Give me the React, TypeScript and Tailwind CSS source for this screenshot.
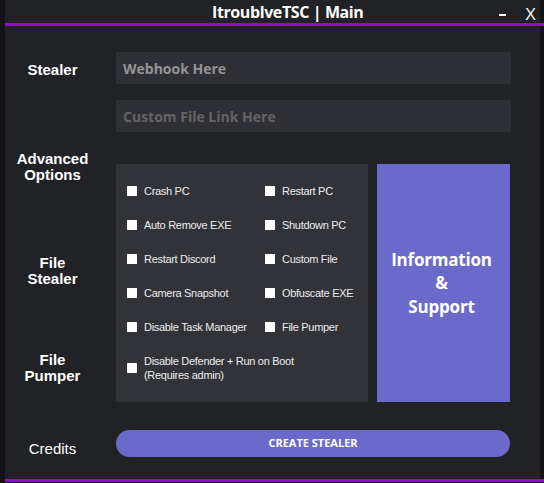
const segoe = { fontFamily: '"Open Sans", "Noto Sans", sans-serif' };
const arial = { fontFamily: '"Liberation Sans", Arial, sans-serif' };

function Check({ children }: { children: React.ReactNode }) {
  return (
    <div className="flex items-center gap-[7px]">
      <span className="h-[10px] w-[10px] shrink-0 bg-white" />
      <span className="text-[11px] leading-[14px] tracking-[-0.3px] text-[#ececec]">{children}</span>
    </div>
  );
}

export default function App() {
  const rows: [string, string][] = [
    ["Crash PC", "Restart PC"],
    ["Auto Remove EXE", "Shutdown PC"],
    ["Restart Discord", "Custom File"],
    ["Camera Snapshot", "Obfuscate EXE"],
    ["Disable Task Manager", "File Pumper"],
  ];

  return (
    <div className="flex h-[483px] w-[544px] bg-[#121212]">
      {/* window edge */}
      <div className="w-[5px] bg-[#141414]" />

      <div className="flex flex-1 flex-col bg-[#212226]">
        {/* Title bar */}
        <header className="flex h-[23px] items-center border-r-4 border-[#141414] text-white">
          <span className="ml-[207px] text-[16px] font-bold tracking-[-0.4px]" style={segoe}>
            ItroublveTSC | Main
          </span>
          <div className="ml-auto mr-[5px] flex items-center">
            <span className="mt-[6px] h-[2px] w-[7px] bg-white" />
            <span className="ml-[20px] mt-[4px] scale-x-110 text-[16px] leading-none" style={segoe}>
              X
            </span>
          </div>
        </header>
        <div className="h-[3px] bg-[#8b12c8]" />

        {/* Body */}
        <div className="flex flex-1 border-r-4 border-[#141414]">
          {/* Labels */}
          <div
            className="flex w-[95px] flex-col items-center text-center text-[15px] font-bold leading-4 text-white"
            style={arial}
          >
            <div className="mt-[36px]">Stealer</div>
            <div className="mt-[73px]">
              Advanced
              <br />
              Options
            </div>
            <div className="mt-[72px]">
              File
              <br />
              Stealer
            </div>
            <div className="mt-[65px]">
              File
              <br />
              Pumper
            </div>
            <div className="mt-[57px] font-normal">Credits</div>
          </div>

          {/* Content */}
          <div className="ml-4 flex w-[395px] flex-col pt-[26px]">
            <div
              className="flex h-8 items-center bg-[#2f3035] pl-[7px] text-[14px] font-bold text-[#939393]"
              style={segoe}
            >
              Webhook Here
            </div>
            <div
              className="mt-4 flex h-8 items-center bg-[#2f3035] pl-[7px] text-[14px] font-bold text-[#646464]"
              style={segoe}
            >
              Custom File Link Here
            </div>

            <div className="mt-8 flex gap-[9px]">
              <div className="flex h-[238px] w-[252px] flex-col gap-5 bg-[#323338] pt-5 pl-[11px]" style={arial}>
                {rows.map(([a, b]) => (
                  <div key={a} className="flex">
                    <div className="w-[138px]">
                      <Check>{a}</Check>
                    </div>
                    <Check>{b}</Check>
                  </div>
                ))}
                <Check>
                  Disable Defender + Run on Boot
                  <br />
                  (Requires admin)
                </Check>
              </div>

              <div
                className="flex h-[238px] w-[133px] items-center justify-center bg-[#6a6acb] pr-1 text-center text-[17px] font-bold leading-[23.5px] tracking-[-0.2px] text-white"
                style={segoe}
              >
                <div>
                  Information
                  <br />
                  &amp;
                  <br />
                  Support
                </div>
              </div>
            </div>

            <button
              className="mt-[28px] h-[27px] w-[394px] rounded-full bg-[#6a6acb] text-[11px] font-bold text-white"
              style={segoe}
            >
              CREATE STEALER
            </button>
          </div>
        </div>
        <div className="h-[3px] bg-[#8b12c8]" />
        <div className="h-px bg-[#121212]" />
      </div>
    </div>
  );
}
